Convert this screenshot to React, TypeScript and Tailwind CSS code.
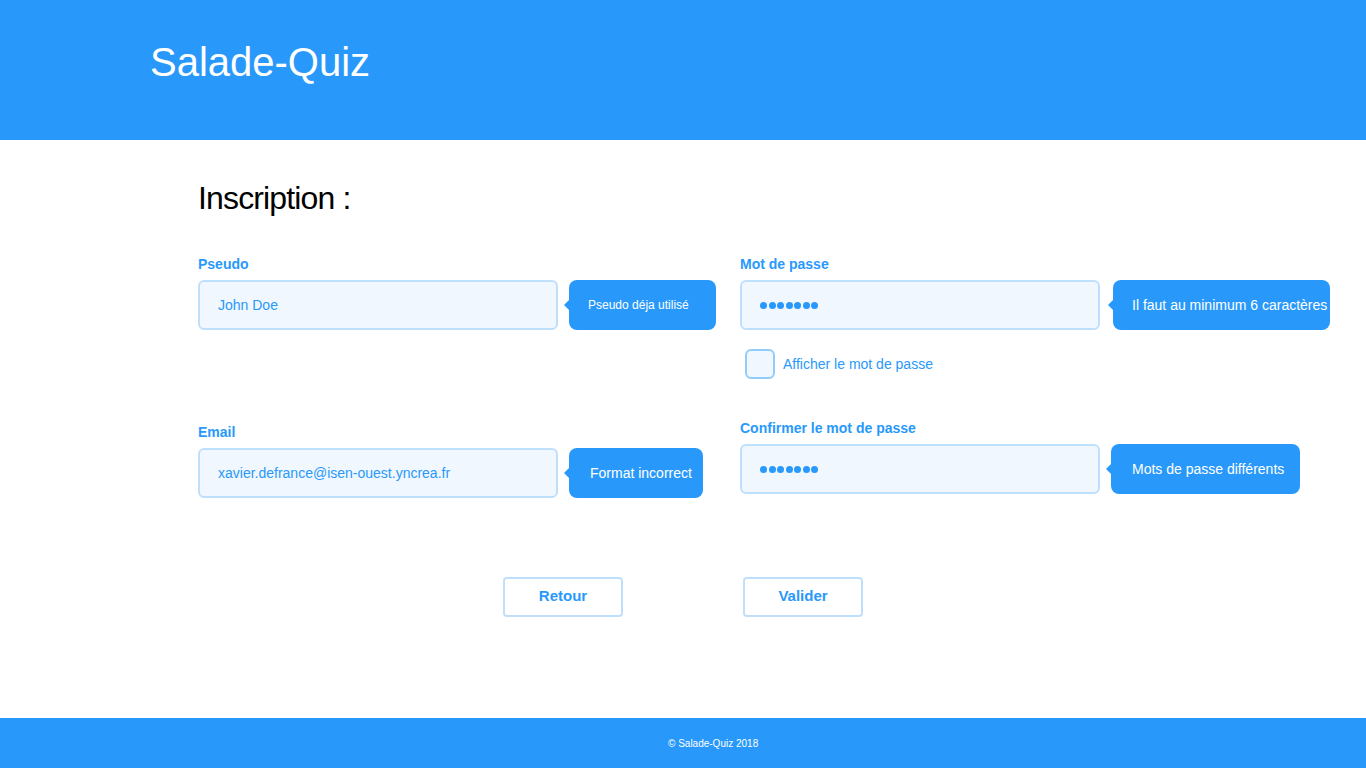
import React from 'react';

const font = { fontFamily: '"Liberation Sans", Arial, sans-serif' };

const Tip = ({ text, className }: { text: string; className: string }) => (
  <div className={`relative flex items-center h-[50px] rounded-lg bg-[#2899fb] text-white ${className}`}>
    <span className="absolute left-[-5px] top-1/2 -translate-y-1/2 w-0 h-0 border-y-[5px] border-y-transparent border-r-[5px] border-r-[#2899fb]" />
    {text}
  </div>
);

const Dots = () => (
  <div className="flex gap-[1.5px]">
    {[0, 1, 2, 3, 4, 5, 6].map((i) => (
      <span key={i} className="w-[7px] h-[7px] rounded-full bg-[#2899fb]" />
    ))}
  </div>
);

const Field = ({ children }: { children: React.ReactNode }) => (
  <div className="w-[360px] h-[50px] flex items-center pl-[18px] rounded-md border-2 border-[#bfe0fc] bg-[#f0f7fe] text-sm text-[#2899fb]">
    {children}
  </div>
);

const Label = ({ text, className = '' }: { text: string; className?: string }) => (
  <label className={`block text-sm leading-4 font-bold text-[#2899fb] ${className}`}>{text}</label>
);

export default function App() {
  return (
    <div className="h-screen flex flex-col bg-white" style={font}>
      <header className="h-[140px] bg-[#2899fb] pl-[150px] pt-[38px]">
        <h1 className="text-[40px] leading-[48px] text-white">Salade-Quiz</h1>
      </header>

      <main className="flex-1 pl-[198px] pt-[177px] relative">
        <h2 className="absolute left-[198px] top-[40px] text-[32px] leading-9 tracking-[-0.85px] text-black">Inscription :</h2>
        <div className="flex gap-[22px] mt-[-61px]">
          <div className="flex flex-col w-[520px]">
            <Label text="Pseudo" className="mb-[8px]" />
            <div className="flex items-center gap-[11px]">
              <Field>John Doe</Field>
              <Tip text="Pseudo déja utilisé" className="w-[147px] pl-[19px] text-xs" />
            </div>
            <Label text="Email" className="mt-[94px] mb-[8px]" />
            <div className="flex items-center gap-[11px]">
              <Field>xavier.defrance@isen-ouest.yncrea.fr</Field>
              <Tip text="Format incorrect" className="w-[134px] pl-[21px] text-sm" />
            </div>
          </div>

          <div className="flex flex-col">
            <Label text="Mot de passe" className="mb-[8px]" />
            <div className="flex items-center gap-[13px]">
              <Field><Dots /></Field>
              <Tip text="Il faut au minimum 6 caractères" className="w-[217px] pl-[19px] text-sm whitespace-nowrap" />
            </div>
            <div className="flex items-center mt-[19px] ml-[5px] gap-[8px]">
              <span className="w-[30px] h-[30px] rounded-md border-2 border-[#93cbfa] bg-[#f0f7fe]" />
              <span className="text-sm text-[#2899fb]">Afficher le mot de passe</span>
            </div>
            <Label text="Confirmer le mot de passe" className="mt-[41px] mb-[8px]" />
            <div className="flex items-center gap-[11px]">
              <Field><Dots /></Field>
              <Tip text="Mots de passe différents" className="w-[189px] pl-[21px] text-sm" />
            </div>
          </div>
        </div>

        <div className="flex justify-center gap-[120px] mt-[79px] ml-[-198px]">
          <button className="w-[120px] h-[40px] pb-[1px] rounded-sm border-2 border-[#bfe0fc] bg-white text-[15px] font-bold text-[#2899fb]">Retour</button>
          <button className="w-[120px] h-[40px] pb-[1px] rounded-sm border-2 border-[#bfe0fc] bg-white text-[15px] font-bold text-[#2899fb]">Valider</button>
        </div>
      </main>

      <footer className="h-[50px] bg-[#2899fb] flex items-center pl-[668px] text-[10px] text-white">
        © Salade-Quiz 2018
      </footer>
    </div>
  );
}
